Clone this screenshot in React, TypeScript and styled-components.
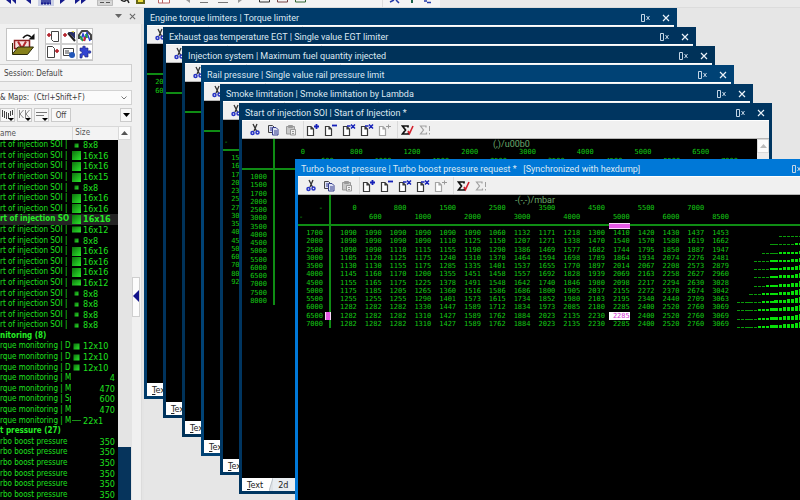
import React from "react";
import styled, { createGlobalStyle, css } from "styled-components";

const UI = '"DejaVu Sans Condensed", "Noto Sans", "Liberation Sans", sans-serif';
const CAPTION = 'Roboto, "Liberation Sans", sans-serif';
const MONO = '"DejaVu Sans Mono", "Liberation Mono", monospace';
const GREEN = "#0f8c14";

const Global = createGlobalStyle`
  * { box-sizing: border-box; }
  body { margin: 0; background: #e6e6e6; font-family: ${UI}; font-size: 8px; overflow: hidden; }
  button, input, select { font: inherit; color: inherit; margin: 0; padding: 0; border: 0; background: none; border-radius: 0; }
`;

const Shell = styled.div`
  display: grid;
  grid-template-rows: 8px minmax(0, 1fr);
  height: 100vh;
  overflow: hidden;
`;
const TopBar = styled.header`
  display: flex;
  background: linear-gradient(90deg, #f4f4f4 0 440px, #e9e9e9 440px);
  border-bottom: 1px solid #dcdcdc;
  overflow: hidden;
`;
const Main = styled.div`
  display: grid;
  grid-template-columns: 144px minmax(0, 1fr);
  min-height: 0;
`;
const Sidebar = styled.aside`
  display: grid;
  grid-template-columns: 132px 12px;
  grid-template-rows: 16px minmax(0, 1fr);
  background: #f0f0f0;
  min-height: 0;
`;
const PaneHead = styled.div`
  grid-column: 1 / 3;
  display: flex;
  align-items: center;
  justify-content: flex-end;
  gap: 6px;
  padding-right: 8px;
  background: #e7e7e7;
`;
const PlainButton = styled.button`
  display: flex;
  align-items: center;
  justify-content: center;
  width: 8px;
  height: 8px;
`;
const PaneBody = styled.div`
  display: flex;
  flex-direction: column;
  min-height: 0;
`;
const Launch = styled.div`
  display: flex;
  gap: 6px;
  padding: 4px 0 3px 6px;
`;
const BigButton = styled.button`
  width: 33px;
  height: 33px;
  background: #fff;
  border: 1px solid #c4c4c4;
`;
const SmallGrid = styled.div`
  display: grid;
  grid-template-columns: repeat(3, 16px);
  grid-template-rows: repeat(2, 16px);
  outline: 1px solid #c4c4c4;
  outline-offset: -1px;
`;
const SmallButton = styled.button`
  background: #fff;
  border: 1px solid #d0d0d0;
  display: flex;
  align-items: center;
  justify-content: center;
`;
const Session = styled.input`
  width: 132px;
  height: 18px;
  padding-left: 4px;
  background: #f6f6f6;
  border: 1px solid #cfcfcf;
  border-left: 0;
  color: #444;
`;
const Combo = styled.div`
  display: flex;
  align-items: center;
  height: 15px;
  margin-top: 8px;
  padding-right: 4px;
  background: #fbfbfb;
  border: 1px solid #d2d2d2;
  border-left: 0;
  color: #3a3a3a;
`;
const ComboSelect = styled.select`
  appearance: none;
  flex: 1;
  height: 13px;
  white-space: pre;
`;
const FilterBar = styled.div`
  display: flex;
  gap: 2px;
  padding: 3px 0 4px;
`;
const FilterButton = styled.button<{ $w?: number; $end?: boolean }>`
  display: flex;
  align-items: center;
  justify-content: center;
  width: ${(p) => p.$w ?? 15}px;
  height: 14px;
  background: #f8f8f8;
  border: 1px solid #cbcbcb;
  color: #444;
  margin-left: ${(p) => (p.$end ? "auto" : 0)};
`;
const ListArea = styled.div`
  display: grid;
  grid-template-columns: 118px 14px;
  flex: 1;
  min-height: 0;
`;
const MapTable = styled.table`
  display: grid;
  grid-template-rows: 14px minmax(0, 1fr);
  background: #000;
  color: #1fe01f;
  min-height: 0;
  thead, tbody { display: grid; grid-auto-rows: minmax(0, 1fr); min-height: 0; }
`;
const MapRow = styled.tr<{ $head?: boolean; $bold?: boolean; $selected?: boolean }>`
  display: grid;
  grid-template-columns: ${(p) => (p.$bold && !p.$selected ? "1fr" : "72px 46px")};
  align-items: center;
  line-height: 10px;
  white-space: nowrap;
  font-weight: ${(p) => (p.$bold ? 700 : 400)};
  background: ${(p) => (p.$selected ? "#242424" : "transparent")};
  ${(p) => p.$bold && css`color: #25ee25;`}
  td, th { padding: 0; text-align: left; font-weight: inherit; }
  ${(p) => p.$head && css`
    background: #f3f3f3;
    color: #555;
    border-top: 1px solid #d8d8d8;
  `}
`;
const NameCell = styled.td`
  width: 71px;
  overflow: hidden;
`;
const SizeHead = styled.th`
  height: 100%;
  border-left: 1px solid #d8d8d8;
  line-height: 12px;
`;
const SizeCell = styled.td<{ $number?: boolean }>`
  display: flex;
  align-items: center;
  gap: 2px;
  font-size: ${(p) => (p.$number ? 8 : 9)}px;
  font-size: 9px;
  justify-content: ${(p) => (p.$number ? "flex-end" : "flex-start")};
  padding-right: ${(p) => (p.$number ? 3 : 0)}px !important;
`;
const Track = styled.div`
  display: flex;
  flex-direction: column;
  justify-content: space-between;
  padding-right: 1px;
  background: #e4e4e4;
`;
const UpButton = styled.button`
  display: flex;
  align-items: center;
  justify-content: center;
  height: 14px;
  width: 100%;
  background: #fcfcfc;
  border: 1px solid #d9d9d9;
`;
const BlueThumb = styled.div`
  height: 53px;
  background: #06345c;
`;
const Gutter = styled.div`
  display: flex;
  flex-direction: column;
  padding-top: 253px;
  background: linear-gradient(90deg, #f0f0f0 0 9px, #dcdcdc 9px 10px, #e4e4e4 10px);
`;
const Handle = styled.button`
  width: 8px;
  height: 40px;
  background: #fcfcfc;
  border: 1px solid #cfcfcf;
`;
const Desk = styled.main`
  position: relative;
  overflow: hidden;
  background: #e6e6e6;
`;

/* MDI child windows float freely over the desk */
const Frame = styled.section<{ $x: number; $y: number; $color: string }>`
  position: absolute;
  left: ${(p) => p.$x}px;
  top: ${(p) => p.$y}px;
  width: 533px;
  height: 391px;
  display: flex;
  flex-direction: column;
  padding: 0 3px 3px;
  background: ${(p) => p.$color};
`;
const TitleBar = styled.div`
  display: flex;
  align-items: center;
  height: 17px;
  padding: 2px 4px 0 3px;
  color: #dce8f2;
`;
const Title = styled.h2`
  flex: 1;
  margin: 0;
  font-family: ${CAPTION};
  font-size: 9px;
  line-height: 14px;
  font-weight: 400;
  white-space: pre;
`;
const TitleButton = styled.button`
  display: flex;
  margin-left: 12px;
`;
const ToolRow = styled.div`
  display: flex;
  align-items: center;
  height: 19px;
  padding-left: 4px;
  background: #f0f0f0;
  border-top: 1px solid #fff;
  border-bottom: 1px solid #b5b5b5;
`;
const ToolButton = styled.button`
  display: flex;
  align-items: center;
  justify-content: center;
  width: 18px;
  height: 16px;
`;
const Divider = styled.span`
  width: 4px;
  height: 17px;
  border-right: 1px solid #dadada;
`;
const Body = styled.div`
  display: flex;
  flex: 1;
  min-height: 0;
  background: #000;
`;
const Sheet = styled.div`
  flex: 1;
  min-width: 0;
  overflow: hidden;
`;
const Grid = styled.table`
  display: block;
  font-family: ${MONO};
  font-size: 7px;
  line-height: 8px;
  color: #14c814;
  thead { display: block; height: 31px; border-bottom: 2px solid ${GREEN}; }
`;
const GridBody = styled.tbody<{ $h: number }>`
  display: grid;
  grid-template-rows: 3px;
  grid-auto-rows: minmax(0, 1fr);
  height: ${(p) => p.$h}px;
`;
const Line = styled.tr<{ $w: number; $h?: number }>`
  display: grid;
  grid-template-columns: 34px repeat(16, minmax(0, 1fr)) 70px;
  column-gap: 4px;
  width: ${(p) => p.$w}px;
  ${(p) => p.$h && css`height: ${p.$h}px;`}
  td, th { padding: 0; font-weight: 400; text-align: right; white-space: nowrap; position: relative; }
`;
const Label = styled.th<{ $marked?: boolean }>`
  width: 33px;
  padding-right: 6px !important;
  border-right: 2px solid ${GREEN};
  ${(p) => p.$marked && css`
    &::after {
      content: "";
      position: absolute;
      right: -2px;
      top: 0;
      width: 4px;
      height: 8px;
      background: #e65ae6;
      border: 1px solid #f7d7f7;
      border-width: 0 1px;
    }
  `}
`;
const AxisCell = styled.th<{ $marked?: boolean }>`
  ${(p) => p.$marked && css`
    &::after {
      content: "";
      position: absolute;
      left: 0;
      right: 0;
      top: 10px;
      height: 4px;
      background: #e65ae6;
      border: 1px solid #f7d7f7;
      border-width: 1px 0;
    }
  `}
`;
const Corner = styled.span`
  position: absolute;
  left: 1px;
  top: 0;
`;
const Caption = styled.td<{ $left: number }>`
  grid-column: 2 / -1;
  padding-left: ${(p) => p.$left}px !important;
  text-align: left !important;
  font-family: ${CAPTION};
  font-size: 9px;
  line-height: 11px;
  color: #6ca86c;
`;
const Value = styled.td<{ $marked?: boolean }>`
  ${(p) => p.$marked && css`
    background: #fff;
    color: #d633d6;
  `}
`;
const Spark = styled.td`
  padding-left: 4px !important;
  svg { display: block; }
`;
const SheetTrack = styled.div`
  width: 12px;
  background: #ececec;
`;
const Tabs = styled.div`
  display: flex;
  height: 13px;
  font-size: 9px;
  background: #dfe3e7;
`;
const Tab = styled.button<{ $on?: boolean }>`
  height: 13px;
  padding: 0 6px 0 5px;
  line-height: 12px;
  color: #222;
  background: ${(p) => (p.$on ? "#fff" : "#e9edf1")};
`;
const Key = styled.u`
  text-underline-offset: 1px;
`;
const TabSlant = () => (
  <svg width="4" height="13" viewBox="0 0 4 13"><path d="M0 13V0h4z" fill="#fff" /><path d="M0 13L4 0" stroke="#b9c0c7" /></svg>
);

const Page = ({ sign, gray }: { sign: string; gray?: boolean }) => {
  const c = gray ? "#a5a5a5" : "#3a3a3a";
  const b = gray ? "#999" : "#1520b8";
  return (
    <svg width="14" height="14" viewBox="0 0 14 14" fill="none">
      <path d="M1.500 3.500h3.500l2.500 2.500v6.500h-6zM5 3.500v2.500h2.500" fill="#fff" stroke={c} strokeWidth="1.200" />
      {sign === "+" && <path d="M8 3.500h5M10.500 1v5" stroke={b} strokeWidth="1.800" />}
      {sign === "-" && <path d="M8 2.500h5" stroke={b} strokeWidth="1.800" />}
      {sign === "x" && <path d="M5 3h3.500M9 1.500l4 4M13 1.500l-4 4" stroke={b} strokeWidth="1.500" />}
      {sign === "e" && <path d="M8 3.500h5M10.500 1.500v4" stroke={b} />}
    </svg>
  );
};
const Scissors = () => (
  <svg width="12" height="13" viewBox="0 0 12 13" fill="none">
    <path d="M4 1l3.500 7M8 1L5 8" stroke="#333" strokeWidth="1.300" />
    <circle cx="3.500" cy="10" r="1.500" stroke="#2632c4" strokeWidth="1.500" />
    <circle cx="8.500" cy="9.500" r="1.500" stroke="#2632c4" strokeWidth="1.500" />
  </svg>
);
const Copy = () => (
  <svg width="12" height="12" viewBox="0 0 12 12" fill="#dfe2f4">
    <path d="M1.500 1.500h4l1.500 1.500v5.500h-5.500z" stroke="#444" />
    <path d="M5.500 3.500h3.500l2 2v5.500h-5.500z" stroke="#343c8c" />
    <path d="M3 4h2M3 6h2M7 7h3M7 9h3" stroke="#343c8c" />
  </svg>
);
const Paste = () => (
  <svg width="12" height="12" viewBox="0 0 12 12" fill="#c8c8c8" stroke="#999">
    <path d="M1.500 2.500h8v7.500h-8zM3.500 1.500h4v2h-4z" />
    <path d="M5.500 5.500h5v5.500h-5z" fill="#eee" />
    <path d="M7 7.500h2M7 9.500h2" />
  </svg>
);
const Sigma = ({ gray }: { gray?: boolean }) => (
  <svg width="13" height="12" viewBox="0 0 13 12" fill="none">
    <path d="M7 3.500V2H1.500l3 4-3 4H7.500V8.500" stroke={gray ? "#a0a0a0" : "#111"} strokeWidth={gray ? 1.2 : 1.7} />
    {gray ? <path d="M10.500 2v5M10.500 9v1.500" stroke="#a0a0a0" /> : <path d="M7 7l1.500 2.500L12 2" stroke="#d3202c" strokeWidth="1.600" />}
  </svg>
);
const Dock = () => (
  <svg width="9" height="8" viewBox="0 0 9 8" fill="none" stroke="#c3d5e5">
    <path d="M.5.500h3v7h-3zM5.500 2l3 4M8.500 2l-3 4" />
  </svg>
);
const Close = ({ color = "#eaf2f9", size = 8 }) => (
  <svg width={size} height={size} viewBox="0 0 8 8" fill="none" stroke={color}>
    <path d="M1 1l6 6M7 1L1 7" strokeWidth="1.200" />
  </svg>
);
const Arrow = ({ up, color = "#555" }: { up?: boolean; color?: string }) => (
  <svg width="7" height="4" viewBox="0 0 7 4"><path d={up ? "M0 4h7L3.500 0z" : "M0 0h7L3.500 4z"} fill={color} /></svg>
);

type MdiProps = { x: number; y: number; color: string; title: string; scroll?: boolean; children?: React.ReactNode };
const Mdi = ({ x, y, color, title, scroll, children }: MdiProps) => (
  <Frame $x={x - 144} $y={y - 8} $color={color}>
    <TitleBar>
      <Title>{title}</Title>
      <TitleButton aria-label="Dock"><Dock /></TitleButton>
      <TitleButton aria-label="Close"><Close /></TitleButton>
    </TitleBar>
    <ToolRow>
      <ToolButton aria-label="Cut"><Scissors /></ToolButton>
      <ToolButton aria-label="Copy"><Copy /></ToolButton>
      <ToolButton aria-label="Paste"><Paste /></ToolButton>
      <Divider />
      <ToolButton aria-label="Add"><Page sign="+" /></ToolButton>
      <ToolButton aria-label="Remove"><Page sign="-" /></ToolButton>
      <ToolButton aria-label="Delete row"><Page sign="x" /></ToolButton>
      <ToolButton aria-label="Delete column"><Page sign="x" /></ToolButton>
      <ToolButton aria-label="Edit"><Page sign="e" gray /></ToolButton>
      <Divider />
      <ToolButton aria-label="Checksum"><Sigma /></ToolButton>
      <ToolButton aria-label="Checksum warning"><Sigma gray /></ToolButton>
    </ToolRow>
    <Body>
      <Sheet>{children}</Sheet>
      {scroll && <SheetTrack><UpButton aria-label="Scroll up"><Arrow up color="#bbb" /></UpButton></SheetTrack>}
    </Body>
    <Tabs>
      <Tab $on><Key>T</Key>ext</Tab>
      <TabSlant />
      <Tab>2d</Tab>
      <TabSlant />
    </Tabs>
  </Frame>
);

type MapProps = {
  w?: number; caption?: string; captionLeft?: number; axis?: string[]; labels?: string[];
  values?: number[][]; markCol?: number; markRow?: number; bare?: boolean; dash?: boolean;
};
const MapGrid = ({ w = 505, caption = "", captionLeft = 0, axis = [], labels = [], values, markCol = -1, markRow = -1, bare, dash }: MapProps) => (
  <Grid>
    <thead>
      {!bare && (
        <>
          <Line $w={w} $h={9}><Label />{caption && <Caption $left={captionLeft}>{caption}</Caption>}</Line>
          <Line $w={w} $h={9}>
            <Label>{values && "-"}</Label>
            {axis.map((a, k) => <AxisCell key={k}>{k % 2 ? "" : a}</AxisCell>)}
          </Line>
          <Line $w={w} $h={11}>
            <Label>{dash && <Corner>-</Corner>}</Label>
            {axis.map((a, k) => <AxisCell key={k} $marked={k === markCol}>{k % 2 ? a : ""}</AxisCell>)}
          </Line>
        </>
      )}
    </thead>
    {labels.length > 0 && (
      <GridBody $h={3 + Math.round(labels.length * 8.27)}>
        <Line $w={w}>{!bare && <Label />}</Line>
        {labels.map((l, r) => (
          <Line key={l} $w={w}>
            <Label $marked={r === markRow}>{l}</Label>
            {values?.[r].map((v, k) => <Value key={k} $marked={r === markRow && k === markCol}>{v}</Value>)}
            {values && (
              <Spark>
                <svg width="66" height="8" viewBox="0 0 66 8" shapeRendering="crispEdges">
                  {values[r].map((v, k) => {
                    const h = Math.round((v - 1060) / 350);
                    return <rect key={k} x={k * 4.15} y={8 - h} width="3.300" height={h} fill={h > 1 ? "#08e008" : "#0a9a0a"} />;
                  })}
                </svg>
              </Spark>
            )}
          </Line>
        ))}
      </GridBody>
    )}
  </Grid>
);

const N = (s: string) => s.split(" ").map(Number);
const BOOST = [
  N("1090 1090 1090 1090 1090 1090 1060 1132 1171 1218 1300 1410 1420 1430 1437 1453"),
  N("1090 1090 1090 1090 1110 1125 1150 1207 1271 1338 1470 1540 1570 1580 1619 1662"),
  N("1090 1090 1110 1115 1155 1190 1290 1386 1469 1577 1682 1744 1795 1850 1887 1947"),
  N("1105 1120 1125 1175 1240 1310 1370 1464 1594 1698 1789 1864 1934 2074 2276 2481"),
  N("1130 1130 1155 1175 1285 1335 1401 1537 1655 1770 1897 2014 2067 2208 2573 2879"),
  N("1145 1160 1170 1200 1355 1451 1458 1557 1692 1828 1939 2069 2163 2258 2627 2960"),
  N("1155 1165 1175 1225 1378 1491 1548 1642 1740 1846 1980 2098 2217 2294 2630 3028"),
  N("1175 1185 1205 1265 1360 1516 1586 1686 1800 1905 2037 2155 2272 2370 2674 3042"),
  N("1255 1255 1255 1290 1401 1573 1615 1734 1852 1980 2103 2195 2340 2440 2709 3063"),
  N("1282 1282 1282 1330 1447 1589 1712 1834 1973 2085 2180 2285 2400 2520 2760 3069"),
  N("1282 1282 1282 1310 1427 1589 1762 1884 2023 2135 2230 2285 2400 2520 2760 3069"),
  N("1282 1282 1282 1310 1427 1589 1762 1884 2023 2135 2230 2285 2400 2520 2760 3069"),
];
const BOOST_X = "0 600 800 1000 1500 2000 2500 3000 3500 4000 4500 5000 5500 6000 7000 8500".split(" ");
const BOOST_Y = "1700 2000 2500 3000 3500 4000 4500 5000 5500 6000 6500 7000".split(" ");
const SOI_X = "0 600 800 1000 1200 1500 2000 2500 3000 3500 4000 4500 5000 5500 6500 7000".split(" ");
const SOI_Y = "1000 1500 1700 2000 2500 3000 3500 4000 4500 5000 5500 6000 6500 7000 7500 8000".split(" ");
const SMOKE_Y = "1500 1600 1750 2000 2300 2500 2750 3000 3500 4000 4500 5000 6000 7000 8000 9200".split(" ");

const SIZES = "8x8 16x16 16x16 16x15 8x8 16x16 16x16 16x16 16x12 8x8 16x16 16x16 16x16 16x12 8x8 8x8 8x8 8x8".split(" ");
type Item = { name: string; size?: string; bold?: boolean; selected?: boolean };
const ITEMS: Item[] = [
  ...SIZES.map((size, k) => ({ name: k === 7 ? "rt of injection SO" : "rt of injection SOI |", size, bold: k === 7, selected: k === 7 })),
  { name: "nitoring (8)", bold: true },
  { name: "rque monitoring | D", size: "12x10" },
  { name: "rque monitoring | D", size: "12x10" },
  { name: "rque monitoring | D", size: "12x10" },
  { name: "rque monitoring | M", size: "4" },
  { name: "rque monitoring | M", size: "470" },
  { name: "rque monitoring | Sp", size: "600" },
  { name: "rque monitoring | M", size: "470" },
  { name: "rque monitoring | M", size: "22x1" },
  { name: "t pressure (27)", bold: true },
  ...Array.from({ length: 6 }, () => ({ name: "rbo boost pressure", size: "350" })),
];
const Thumb = ({ size, id }: { size: string; id: string }) => {
  const [a, b] = size.split("x").map(Number);
  const w = a === 8 ? 4 : a === 12 ? 6 : 9;
  const h = b === 8 ? 4 : b === 12 || b === 10 ? 6 : 9;
  return (
    <svg width="9" height="9" viewBox="0 0 9 9">
      <defs>
        <linearGradient id={id} x1="0" y1="0" x2="1" y2="1">
          <stop offset="0" stopColor="#0c720c" /><stop offset="1" stopColor="#2ce62c" />
        </linearGradient>
      </defs>
      {b === 1 ? <path d="M0 4.500h9" stroke="#1b8f1b" /> : <rect x={(9 - w) / 2} y={(9 - h) / 2} width={w} height={h} fill={`url(#${id})`} />}
    </svg>
  );
};

export default function App() {
  return (
    <Shell>
      <Global />
      <TopBar>
        <svg width="440" height="7" viewBox="0 0 440 7">
          <g fill="#151a8c">
            <path d="M6 0l5 4V0zM12 0l4 4V0zM26 0l5 4V0zM60 0v4l5-4zM75 0v4l5-4zM81 0v4l5-4z" />
            <path d="M41 0h10v4h-10z" />
          </g>
          <path d="M38 0h16v6h-16z" fill="#8f9bd0" opacity=".4" />
          <path d="M41 3.500h10" stroke="#151a8c" strokeWidth="2" strokeDasharray="2 1" />
          <path d="M97.500 0h15v5.500h-15z" fill="#d7d7d7" stroke="#bbb" />
          <path d="M100 2.500h4M106 2.500h4" stroke="#555" />
          <path d="M121 0q4 3 6-1l2 4" fill="none" stroke="#222" strokeWidth="1.500" />
          <path d="M136 0h9v4h-9z" fill="#676715" /><path d="M138 0h5v2h-5z" fill="#eedf3c" />
          <path d="M158.500 -1h11v4h-11zM162.500 0v3" fill="#fff" stroke="#b66" />
          <path d="M186 0l4 3V0zM238 0v3l4-3z" fill="#999" />
          <path d="M200 2.500h8M218 2.500h10" stroke="#777" />
          <path d="M259.500 -1h10v3h-10z" fill="none" stroke="#333" />
          <path d="M277.500 -1h10v3h-10z" fill="none" stroke="#744" />
          <path d="M295.500 -1h10v3h-10z" fill="none" stroke="#363" />
          <path d="M390 2l4-2M396 0l3 3M424 1h3M427 2.500h4" stroke="#223aa8" strokeWidth="1.500" />
          <path d="M412 0v3" stroke="#186048" strokeWidth="2" />
          <path d="M382.500 0v7" stroke="#ddd" />
        </svg>
      </TopBar>
      <Main>
        <Sidebar>
          <PaneHead>
            <PlainButton aria-label="Pane menu"><Arrow color="#666" /></PlainButton>
            <PlainButton aria-label="Close pane"><Close color="#666" size={7} /></PlainButton>
          </PaneHead>
          <PaneBody>
            <Launch>
              <BigButton aria-label="Open project">
                <svg width="31" height="31" viewBox="0 0 31 31" fill="none">
                  <path d="M7.500 11.500h15v8h-15z" fill="#f7dede" stroke="#8f1e1e" strokeWidth="1.500" />
                  <path d="M11 12.500l4 7 4-7" stroke="#b3282d" strokeWidth="2" />
                  <path d="M5.500 14v11.500h15l6-7.500H11l-5.500 7" fill="#87811c" stroke="#2c2a08" />
                  <path d="M16 9q4-5 8-1" stroke="#111" strokeWidth="1.600" /><path d="M21.500 10.500h6v-6z" fill="#111" />
                </svg>
              </BigButton>
              <SmallGrid>
                <SmallButton aria-label="Import">
                  <svg width="14" height="14" viewBox="0 0 14 14"><path d="M5.500 2.500h7v10h-5l-2-2z" fill="#fff" stroke="#444" /><path d="M1 6h4M3 4v4" stroke="#b01822" strokeWidth="1.500" /></svg>
                </SmallButton>
                <SmallButton aria-label="Wizard">
                  <svg width="14" height="14" viewBox="0 0 14 14"><path d="M6 3h7v7z" fill="#283068" /><path d="M6 4l7 8" stroke="#222" strokeWidth="2" /><path d="M1 6h4M3 4v4" stroke="#b01822" strokeWidth="1.500" /><path d="M9 2h3v2" fill="#d7cf45" /></svg>
                </SmallButton>
                <SmallButton aria-label="Maps">
                  <svg width="14" height="14" viewBox="0 0 14 14" fill="none"><path d="M1 10V6l3-4h5l4 4v5" stroke="#444" strokeWidth="2" /><path d="M3 11l2-6 2 5 2-6 3 8" stroke="#2a3ed0" strokeWidth="1.500" /><path d="M2 7l3 5M8 5l1 4" stroke="#21a040" strokeWidth="2" /><path d="M6 12l1-4" stroke="#cf2530" strokeWidth="2" /></svg>
                </SmallButton>
                <SmallButton aria-label="Export">
                  <svg width="14" height="14" viewBox="0 0 14 14"><path d="M1.500 1.500h5l2 2v9h-7z" fill="#fff" stroke="#444" /><path d="M9 6h4M11 4v4" stroke="#b01822" strokeWidth="1.500" /></svg>
                </SmallButton>
                <SmallButton aria-label="Send">
                  <svg width="14" height="14" viewBox="0 0 14 14"><path d="M1.500 3.500h10v7h-10zM3 6h4M3 8h5" fill="#fff" stroke="#444" /><circle cx="10" cy="10" r="3" fill="#2357b8" /></svg>
                </SmallButton>
                <SmallButton aria-label="Plug-ins">
                  <svg width="14" height="14" viewBox="0 0 14 14"><path d="M2 3h3q-1-2 1-2t1 2h3v3q3-1 3 1t-3 1v4H7q0-2-1.500-2T4 13H2V9q2 0 2-1.500T2 6z" fill="#3344d0" stroke="#1b2277" strokeWidth=".6" /></svg>
                </SmallButton>
              </SmallGrid>
            </Launch>
            <Session aria-label="Session" defaultValue="Session: Default" />
            <Combo>
              <ComboSelect aria-label="Search maps"><option>{"& Maps:\u00a0 (Ctrl+Shift+F)"}</option></ComboSelect>
              <svg width="6" height="4" viewBox="0 0 6 4" fill="none"><path d="M.5.500L3 3 5.500.500" stroke="#777" /></svg>
            </Combo>
            <FilterBar>
              <FilterButton aria-label="Signals">
                <svg width="13" height="12" viewBox="0 0 13 12"><path d="M1.500 1v7M3.500 2v7M5.500 3v7M7.500 4v6M9.500 2v5M11.500 1v5" stroke="#444" /><path d="M7 9h6l-3 3z" fill="#000" /></svg>
              </FilterButton>
              <FilterButton aria-label="Curves">
                <svg width="13" height="12" viewBox="0 0 13 12" fill="none"><path d="M1.500 1v8M5.500 1L2 5l3.500 4M7.500 1v8M11.500 1L8 5l3.500 4" stroke="#888" /><path d="M7 9h6l-3 3z" fill="#000" /></svg>
              </FilterButton>
              <FilterButton aria-label="Lines">
                <svg width="13" height="12" viewBox="0 0 13 12"><path d="M1 3.500h11M1 6.500h8" stroke="#777" /><path d="M7 9h6l-3 3z" fill="#000" /></svg>
              </FilterButton>
              <FilterButton $w={20}>Off</FilterButton>
              <FilterButton $w={12} $end aria-label="More filters"><Arrow color="#000" /></FilterButton>
            </FilterBar>
            <ListArea>
              <MapTable>
                <thead><MapRow $head><th>ame</th><SizeHead>&nbsp;Size</SizeHead></MapRow></thead>
                <tbody>
                  {ITEMS.map((m, k) => (
                    <MapRow key={k} $bold={m.bold} $selected={m.selected}>
                      <NameCell>{m.name}</NameCell>
                      {m.size && (
                        <SizeCell $number={!m.size.includes("x")}>
                          {m.size.includes("x") && <Thumb size={m.size} id={`t${k}`} />}
                          {m.size}
                        </SizeCell>
                      )}
                    </MapRow>
                  ))}
                </tbody>
              </MapTable>
              <Track>
                <UpButton aria-label="Scroll up"><Arrow up /></UpButton>
                <BlueThumb />
              </Track>
            </ListArea>
          </PaneBody>
          <Gutter>
            <Handle aria-label="Collapse pane">
              <svg width="6" height="12" viewBox="0 0 6 12"><path d="M6 0v12L0 6z" fill="#10128a" /></svg>
            </Handle>
          </Gutter>
        </Sidebar>
        <Desk>
          <Mdi x={144} y={8} color="#003b6a" title="Engine torque limiters | Torque limiter"><MapGrid bare labels={["2000", "6000"]} /></Mdi>
          <Mdi x={163} y={27} color="#00335d" title="Exhaust gas temperature EGT | Single value EGT limiter"><MapGrid bare /></Mdi>
          <Mdi x={182} y={46} color="#003259" title="Injection system | Maximum fuel quantity injected"><MapGrid bare /></Mdi>
          <Mdi x={201} y={65} color="#004275" title="Rail pressure | Single value rail pressure limit"><MapGrid bare /></Mdi>
          <Mdi x={220} y={84} color="#003763" title="Smoke limitation | Smoke limitation by Lambda"><MapGrid dash labels={SMOKE_Y} /></Mdi>
          <Mdi x={239} y={103} color="#003560" title="Start of injection SOI | Start of Injection *" scroll>
            <MapGrid w={570} caption="(,)/u00b0" captionLeft={213} axis={SOI_X} labels={SOI_Y} />
          </Mdi>
          <Mdi x={295} y={159} color="#0078d7" title="Turbo boost pressure | Turbo boost pressure request *   [Synchronized with hexdump]">
            <MapGrid dash caption="-(-,-)/mbar" captionLeft={179} axis={BOOST_X} labels={BOOST_Y} values={BOOST} markCol={11} markRow={10} />
          </Mdi>
        </Desk>
      </Main>
    </Shell>
  );
}
